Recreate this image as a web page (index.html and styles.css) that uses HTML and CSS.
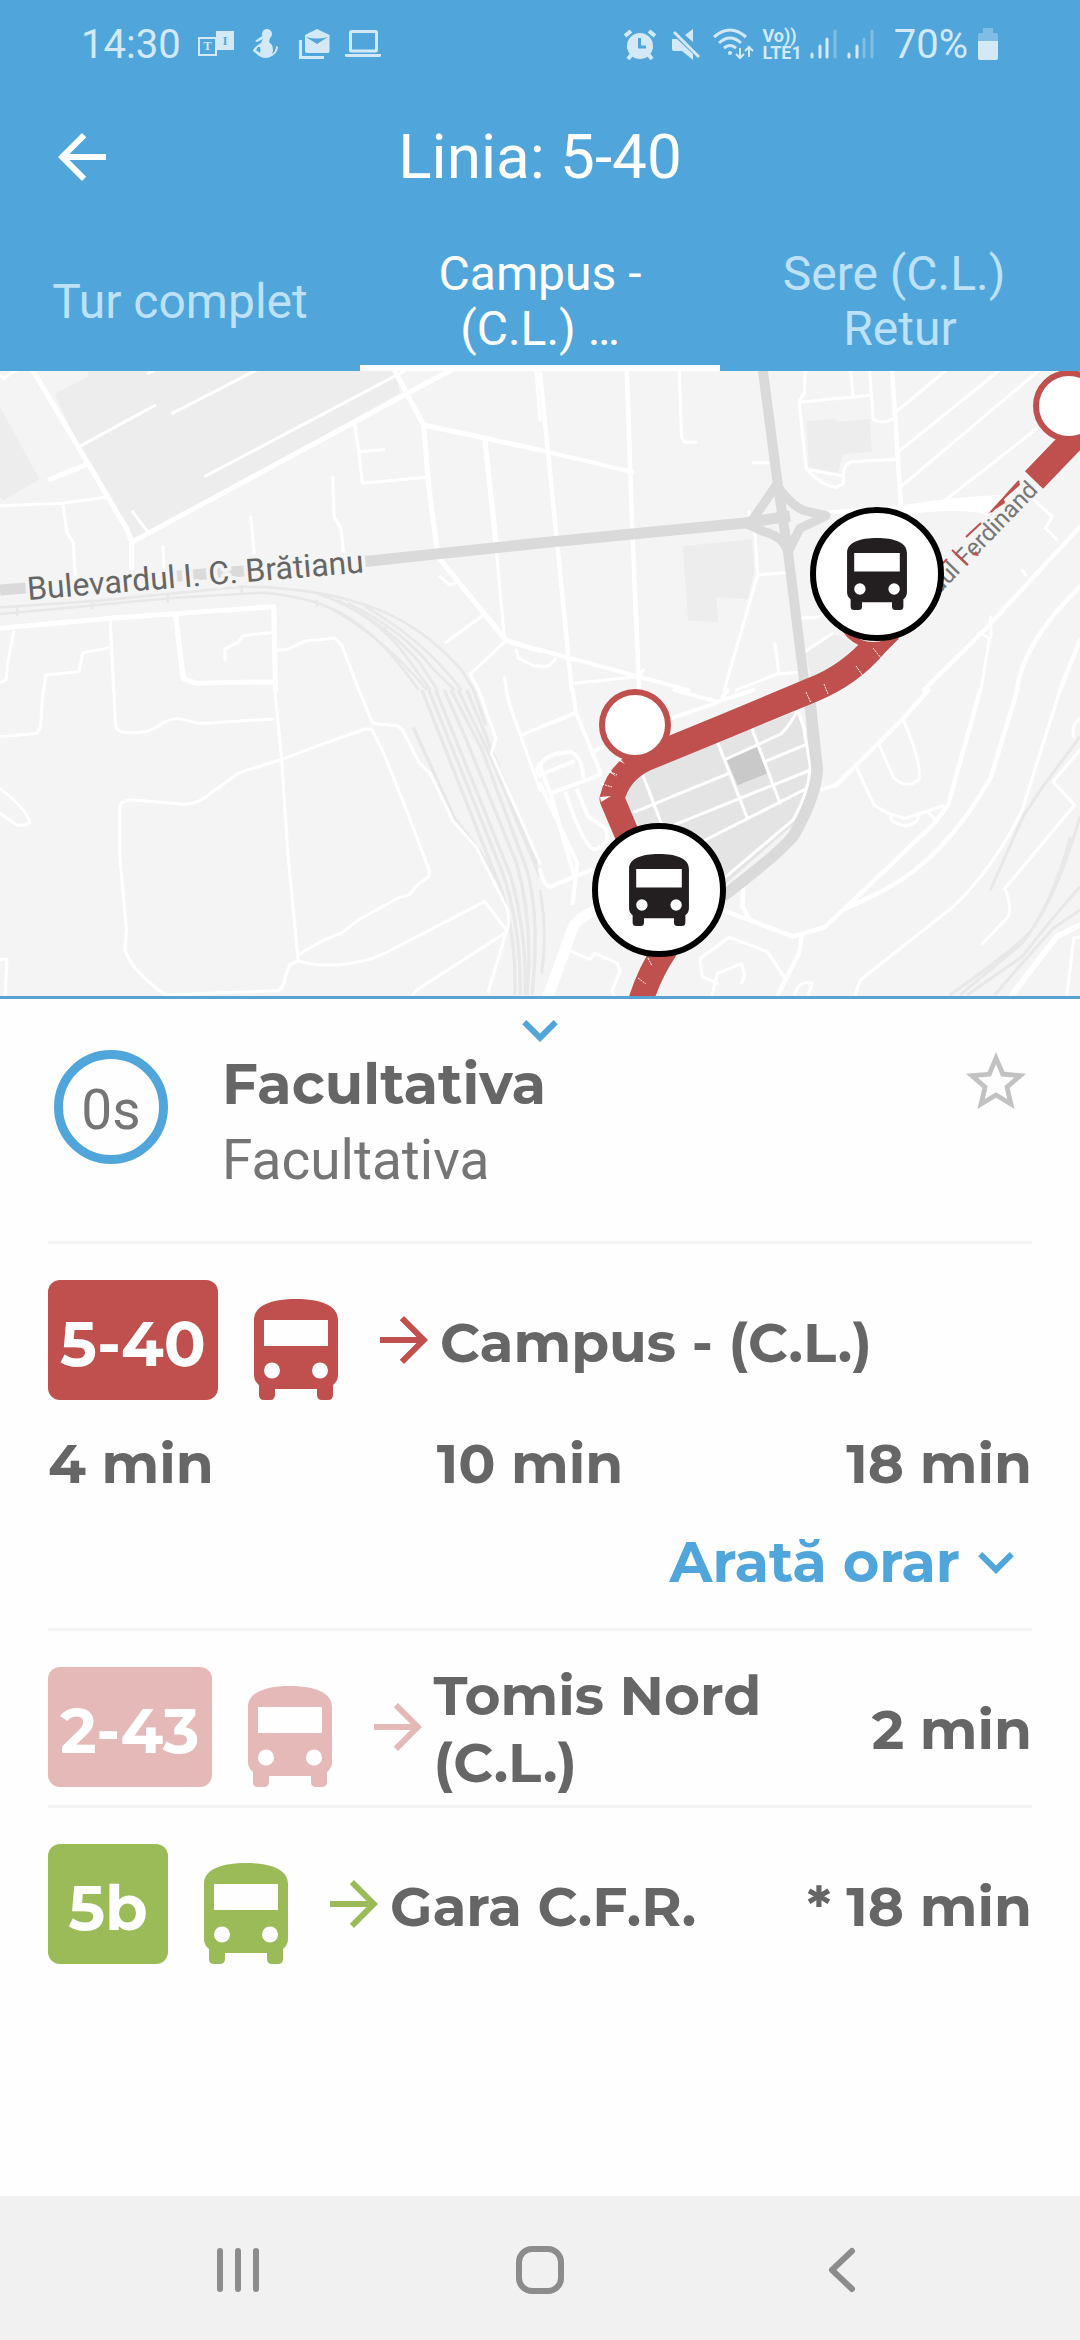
FILE: index.html
```html
<!DOCTYPE html>
<html lang="ro">
<head>
<meta charset="utf-8">
<meta name="viewport" content="width=device-width, initial-scale=1">
<title>Linia: 5-40</title>
<link rel="stylesheet" href="styles.css">
</head>
<body>
<svg class="defs" aria-hidden="true">
  <symbol id="bus" viewBox="0 0 84 101"><path fill="currentColor" fill-rule="evenodd" d="M0 21C0 6 18 0 42 0S84 6 84 21V76Q84 82 79 86V96Q79 101 74 101H68Q63 101 63 96V90H21V96Q21 101 16 101H10Q5 101 5 96V86Q0 82 0 76ZM10 21V47H74V21ZM26 71.500A8 8 0 1 0 10 71.500A8 8 0 1 0 26 71.500ZM74 71.500A8 8 0 1 0 58 71.500A8 8 0 1 0 74 71.500Z"/></symbol>
  <symbol id="arrow" viewBox="4 4 16 16"><path fill="currentColor" d="M12 4l-1.410 1.410L16.170 11H4v2h12.170l-5.580 5.590L12 20l8-8z"/></symbol>
  <symbol id="chevron" viewBox="6 8.590 12 7.410"><path fill="currentColor" d="M7.410 8.590L12 13.170l4.590-4.580L18 10l-6 6-6-6z"/></symbol>
</svg>
<div class="app">
  <header class="header">
    <div class="status">
      <div class="status-group status-left">
        <span>14:30</span>
        <svg class="ic-translate" width="36" height="26" viewBox="198 30 36 26"><path d="M199 37H216V54H199Z" fill="none" stroke="currentColor" stroke-width="2"/><path d="M216 30H234V49H216Z" fill="currentColor"/><text x="207.500" y="49" text-anchor="middle" class="glyph">T</text><text x="225" y="44" text-anchor="middle" class="glyph glyph-dark">I</text></svg>
        <svg class="ic-figure" width="26" height="30" viewBox="253 28 26 30"><g fill="currentColor"><circle cx="267" cy="33" r="5"/><path d="M262 35L255 40L257 41L263 38L261 42C257 44 253 48 253 50L259 55Q266 59 272 55Q278 51 278 46L276 45Q276 50 272 53Q274 49 272 44Q270 42 269 41L270 37Z"/></g><path d="M258 46L256 49L260 52Q261 49 260 46Z" fill="#50a6db"/></svg>
        <svg class="ic-mail" width="32" height="30" viewBox="299 27 32 30"><path d="M300.500 38V55.500H324" fill="none" stroke="currentColor" stroke-width="3"/><path d="M305 33L317 27L329.500 33V49Q329.500 51 328 51H307Q305 51 305 49Z" fill="currentColor"/><path d="M306 35Q317 38 328 35L317 42Z" fill="#50a6db"/></svg>
        <svg width="36" height="28" viewBox="345 29 36 28"><rect x="350.500" y="30.500" width="26" height="19.500" rx="1" fill="none" stroke="currentColor" stroke-width="3"/><path d="M345 53H381V55Q381 56 379 56H347Q345 56 345 55Z" fill="currentColor"/></svg>
      </div>
      <div class="status-group status-right">
        <svg width="32" height="31" viewBox="0 0 32 31"><circle cx="16" cy="17" r="13" fill="currentColor"/><path d="M1 7L7 2M31 7L25 2M4 30L8 25M28 30L24 25" stroke="currentColor" stroke-width="4"/><path d="M15.500 9V18H22" fill="none" stroke="#50a6db" stroke-width="3"/></svg>
        <svg class="ic-mute" width="28" height="31" viewBox="0 0 28 31"><path d="M0 10H5L21 25V31L10 22H2Q0 22 0 20ZM21 0V13L13 6Z" fill="currentColor"/><path d="M2 3L27 28" stroke="currentColor" stroke-width="3"/></svg>
        <svg class="ic-wifi" width="41" height="32" viewBox="0 0 41 32"><g fill="none" stroke="currentColor" stroke-width="3"><path d="M1 9Q17-5 33 9M6 15Q17 5 28 15M11 20Q17 15 23 20"/><path d="M27 20V30M23 26L27 30L31 26M36 29V19M32 23L36 19L40 23" stroke-width="2"/></g><circle cx="17" cy="25" r="2" fill="currentColor"/></svg>
        <span class="volte">Vo))<br>LTE1</span>
        <svg width="27" height="30" viewBox="0 0 27 30"><g stroke="currentColor" stroke-width="3" stroke-linecap="round"><path d="M2 25V28M10 17V28M17 10V28"/><path d="M25 2V28" opacity=".35"/></g></svg>
        <svg class="ic-signal" width="27" height="30" viewBox="0 0 27 30"><g stroke="currentColor" stroke-width="3" stroke-linecap="round"><path d="M2 25V28M10 17V28"/><path d="M17 10V28M25 2V28" opacity=".35"/></g></svg>
        <span class="percent">70%</span>
        <svg class="ic-battery" width="20" height="32" viewBox="0 0 20 32"><path d="M5 5V0H15V5H18Q20 5 20 7V13H0V7Q0 5 2 5Z" fill="currentColor" opacity=".35"/><path d="M0 13H20V30Q20 32 18 32H2Q0 32 0 30Z" fill="currentColor"/></svg>
      </div>
    </div>
    <div class="titlebar">
      <button class="icon-btn" type="button" aria-label="Înapoi"><svg class="back" width="48" height="48"><use href="#arrow"/></svg></button>
      <h1>Linia: 5-40</h1>
    </div>
    <nav class="tabs" role="tablist">
      <button type="button" role="tab" class="tab">Tur complet</button>
      <button type="button" role="tab" class="tab active" aria-selected="true">Campus -<br>(C.L.) …</button>
      <button type="button" role="tab" class="tab">Sere (C.L.)&nbsp;<br>Retur</button>
    </nav>
  </header>

  <main>
    <svg class="map" viewBox="0 371 1080 625" preserveAspectRatio="xMidYMid slice" role="img" aria-label="Hartă">
      <rect y="371" width="1080" height="625" fill="#f4f4f4"/>
      <!-- built-up areas -->
      <g fill="#ededed">
        <g transform="translate(0 370) scale(.3444 .3333)"><path d="M0 110L115 328L8 392L0 380ZM158 72L255 20V0H1150L1160 70L385 515L370 480L230 230Z"/></g>
        <g transform="translate(540 370) scale(.3444 .3333)"><path d="M774 154L860 147V156L957 147L964 245L880 253L866 308L780 292ZM414 528L615 508L622 600L603 688L512 681L517 756L431 752ZM770 850L850 790L930 830L790 925Z"/></g>
        <g transform="translate(540 690) scale(.3444 .3333)"><path fill="#e4e4e4" d="M265 260L750 62L800 200L780 320L740 400L530 590L300 430L240 318Z"/><path fill="#c9c9c9" d="M541 207L630 171L660 250L574 286Z"/></g>
      </g>
      <!-- railway lines -->
      <g fill="none" stroke="#e8e8e8">
        <g transform="translate(0 370) scale(.3444 .3333)" stroke-width="8"><path d="M0 712L290 692L700 650Q900 650 1060 704T1340 900L1375 960M0 732L270 706L500 684L760 668Q920 680 1020 748T1215 960M920 670Q1090 730 1180 860L1250 960M980 690Q1130 770 1220 880L1270 960M1010 700Q1170 780 1260 900L1320 960M960 715Q1110 800 1240 960M1060 710Q1230 810 1340 960M50 705V738M268 690V718M487 670V698M702 645V676M920 690V710M1120 770V795"/></g>
        <g transform="translate(0 690) scale(.3444 .3333)" stroke-width="10"><path d="M1225 0L1440 560Q1500 700 1495 915M1245 0L1460 550Q1515 720 1510 915M1265 0L1480 550Q1530 720 1525 915M1290 0L1350 140L1500 520Q1550 700 1530 915M1310 0L1400 180L1530 540Q1568 680 1545 915M1330 0L1420 190L1568 560M1355 0L1400 110L1560 520M1375 0L1410 105M1200 112L1320 385L1390 480L1440 565"/></g>
        <g transform="translate(540 690) scale(.3444 .3333)" stroke-width="9"><path d="M0 600Q22 730 5 850M1568 140L1460 290L1405 375L1355 490L1308 600M1568 380Q1500 620 1420 730Q1350 800 1190 915M1540 440Q1490 640 1400 760L1220 915M1568 590Q1490 680 1400 800L1240 915M1568 660L1490 715L1400 820L1320 915"/></g>
      </g>
      <!-- streets -->
      <g fill="none" stroke="#fff" stroke-width="9" stroke-linejoin="round" stroke-linecap="round">
        <g transform="translate(0 370) scale(.3444 .3333)">
          <path stroke-width="15" d="M95 0L370 480L382 515V600M385 515L1180 72L1310 0M0 775L320 745L795 710L800 960M510 738L532 925L570 940L795 935M1230 165L1568 240M1145 0L1230 165L1245 350L1268 530M1408 210L1440 515M1275 565L1470 812L1568 842M145 328L248 285"/>
          <path d="M230 230L450 106M500 130L745 0M597 318L1180 0M430 10L450 0M0 407L182 400L305 382M182 400L195 490L213 518L218 615M385 425L430 487M473 530L476 590M728 440L738 550M966 322L970 440L990 475L997 545M1030 165L1042 245L1052 340L1240 322M1042 245L1115 239M1556 0L1568 150M1442 548L1465 812M1470 812L1365 912L1390 960M1295 817L1403 736M1500 840L1505 865L1550 888H1568M1278 620L1305 645L1325 638M653 868V836L690 818L706 797L785 788M805 840H830L890 812L972 805L992 825L1042 960M40 785L22 880L18 930L0 938M320 750L330 960M320 833L240 848L230 905L133 915L127 960M1465 922L1470 960M0 15L10 25L50 0"/>
        </g>
        <g transform="translate(540 370) scale(.3444 .3333)">
          <path stroke-width="13" d="M0 10L50 520L92 960M252 0L268 480L288 960M0 240L268 306M0 840L430 960M1022 0L1048 405M1568 470L1300 770L1115 960"/>
          <path d="M404 0L411 200L420 217H453M620 278H663M770 0L768 70L752 92L773 295Q820 350 860 352L882 340L880 318L775 298M752 97L962 76L968 148Q1000 165 1030 142M902 0L908 74M957 0L962 76M880 318Q880 285 905 275L1035 268M1035 125L1180 0M1035 250L1335 0M1048 350L1450 0M1175 392L1450 170M607 425L625 500L632 615L535 960M632 615L712 608M682 820L694 912L750 907M690 912L570 960M760 745L810 740M770 845L850 790M100 940L285 920L300 900M0 890Q30 895 45 865M1430 385L1487 440L1468 475L1500 508M1400 600L1410 615M1280 790L1305 805L1280 960M1308 740L1310 800"/>
          <path stroke-width="13" d="M1568 650Q1400 820 1385 960M1568 810L1510 960"/>
          <path fill="#fff" d="M840 425L1050 410L1190 390L1350 378L1300 432Q1230 405 1060 430Z"/>
        </g>
        <g transform="translate(0 690) scale(.3444 .3333)">
          <path d="M125 0L118 110L108 130L0 140M331 0L335 105Q340 130 380 128Q430 130 460 108Q490 85 520 86L580 101L792 87M798 0L818 208L835 480L865 805M818 208L695 248L615 307Q575 345 530 343L390 330Q348 330 348 355V500L367 720L363 780Q380 840 480 915L810 902Q825 890 828 860L842 824L865 812Q950 840 1055 812Q1090 805 1130 783L1407 635L1470 720M818 208L950 157L1060 117L1080 118L1112 185L1180 360L1248 545L1245 560L1210 587L1190 613L1160 622L1040 690L995 727L935 753L865 795M1042 0L1080 95L1090 101L1155 107L1170 122L1217 218L1250 252L1315 392L1385 475L1470 650Q1485 700 1470 725L1418 905M1470 727L1210 900L1200 915M1390 0L1440 145L1427 190L1568 520M1470 0L1480 45L1568 300M1515 135L1568 112M0 295Q90 370 85 400Q65 410 45 403L0 370M0 808H20L15 915M1568 220Q1550 240 1568 260"/>
        </g>
        <g transform="translate(540 690) scale(.3444 .3333)">
          <path stroke-width="12" d="M95 0L105 70L175 245M390 0L515 35L620 0M530 20L545 0M380 85L515 38M155 185L180 172M0 112L100 70M0 230Q10 190 90 185Q125 205 125 260M0 230L30 310L175 255M0 280L108 520L95 640M0 255L95 215M30 310L100 560L30 590Q10 590 0 540M108 300L140 380L190 415Q210 460 160 478Q130 480 75 310M100 560L150 540"/>
          <path d="M295 245L352 400M265 370L548 250M390 405L785 240M480 450L785 290M515 155L602 385M615 115L697 340M541 207L700 132Q730 100 748 60L765 110L785 230Q780 310 735 390L540 560M658 213L770 165"/>
          <path stroke-width="13" d="M1128 0L1055 85L860 285L820 297M1278 0L1185 345L1145 400L870 670M1386 0L1310 260Q1180 500 1000 600L880 660L825 712L735 740L530 660M590 590L588 650L610 690M760 740L752 790L690 915"/>
          <path d="M915 225L970 345L1010 370L1060 385L1170 348M1020 375Q1010 395 1060 408Q1100 400 1100 375M1130 370L1145 385M985 165L1025 260Q1060 300 1100 270Q1110 220 1055 90M1510 0L1400 360Q1320 530 1200 650L930 870L915 915M1568 85Q1540 110 1550 140M1568 180L1490 275L1552 345L1350 595Q1370 650 1360 680L1285 760M80 780L145 808L160 790L225 820L232 845L208 905L215 915M500 915L515 850L585 822L595 855L585 880M515 880L470 860L465 805L550 742L660 785L708 860M740 915Q750 870 790 880L780 915M1568 740L1550 745L1530 915"/>
          <path stroke-width="17" d="M1568 705L1500 740L1370 915"/>
          <path stroke-width="32" d="M25 915L95 715Q110 680 180 655"/>
        </g>
      </g>
      <!-- main roads -->
      <g fill="none" stroke="#dadada">
        <path stroke-width="11" d="M0 590L360 562L540 543L745 523M745 523L790 516"/>
        <g transform="translate(540 370) scale(.3444 .3333)"><path stroke-width="29" stroke-linejoin="round" d="M647 0L690 340L710 480L720 545L770 960"/><path stroke-width="27" stroke-linecap="round" d="M690 340L620 445M600 462L650 485Q705 500 718 540M690 350Q740 420 780 425L830 437M825 440L755 475L720 545"/></g>
        <g transform="translate(540 690) scale(.3444 .3333)"><path stroke-width="34" stroke-linejoin="round" d="M780 0L805 240Q800 320 740 430Q720 470 530 620"/></g>
      </g>
      <!-- route -->
      <g fill="none" stroke="#bf504d" stroke-width="25" stroke-linejoin="round">
        <path d="M1082 430L1034 480M890 630L876 644Q850 675 812 690L728 725L645 759Q618 772 612 799L640 865L665 950Q650 972 641 1000"/>
      </g>
      <g stroke="#fff" stroke-width="1" stroke-dasharray="2 1"><path d="M873 648L881 658M856 666L863 676M824 684L828 694M806 692L811 703M608 770L617 775M602 784L612 787M648 958L652 966M638 978L646 984"/></g>
      <path d="M600 797L611 796L601 802ZM616 759L625 764L621 760ZM606 770L617 777L610 771Z" fill="#fff"/>
      <g class="road-label">
        <text x="28" y="600" font-size="32" transform="rotate(-4.700 28 600)">Bulevardul I. C. Brătianu</text>
        <text x="1039" y="491" font-size="24" text-anchor="end" class="minor" transform="rotate(-46 1039 491)">dul Ferdinand</text>
      </g>
      <path d="M1019 481L991 512M981 523L966 537M952 550L968 565M942 564L947 559" stroke="#bf504d" stroke-width="2"/>
      <path d="M1019 481L1020 485L1004 499L1005 503L988 514ZM976 551L979 556L972 555Z" fill="#bf504d"/>
      <g fill="#fff" stroke="#bf504d" stroke-width="6">
        <circle cx="1069" cy="406" r="33"/><circle cx="635" cy="725" r="33"/><circle cx="873" cy="612" r="33"/>
      </g>
      <g class="vehicle"><circle cx="877" cy="574" r="64"/><use href="#bus" x="847" y="538" width="60" height="72"/></g>
      <g class="vehicle"><circle cx="659" cy="890" r="64"/><use href="#bus" x="629" y="854" width="60" height="72"/></g>
    </svg>

    <section class="sheet">
      <button class="icon-btn collapse" type="button" aria-label="Restrânge"><svg width="36" height="22"><use href="#chevron"/></svg></button>
      <div class="stop">
        <div class="timer">0s</div>
        <div class="stop-names">
          <h2>Facultativa</h2>
          <p>Facultativa</p>
        </div>
        <button class="icon-btn star" type="button" aria-label="Favorit"><svg width="60" height="57" viewBox="2 2 20 19"><path fill="currentColor" d="M22 9.240l-7.190-.620L12 2 9.190 8.630 2 9.240l5.460 4.730L5.820 21 12 17.270 18.180 21l-1.630-7.030L22 9.240zM12 15.400l-3.760 2.270 1-4.280-3.320-2.880 4.380-.380L12 6.100l1.710 4.040 4.380.380-3.320 2.880 1 4.280L12 15.400z"/></svg></button>
      </div>

      <article class="line red first">
        <div class="line-row">
          <span class="badge">5-40</span>
          <svg class="bus" width="84" height="101"><use href="#bus"/></svg>
          <svg class="dir" width="48" height="48"><use href="#arrow"/></svg>
          <span class="dest">Campus - (C.L.)</span>
        </div>
        <div class="times"><span>4 min</span><span>10 min</span><span>18 min</span></div>
        <button class="schedule" type="button">Arată orar<svg width="36" height="22"><use href="#chevron"/></svg></button>
      </article>
      <article class="line pink">
        <div class="line-row">
          <span class="badge">2-43</span>
          <svg class="bus" width="84" height="101"><use href="#bus"/></svg>
          <svg class="dir" width="48" height="48"><use href="#arrow"/></svg>
          <span class="dest">Tomis Nord<br>(C.L.)</span>
          <span class="eta">2 min</span>
        </div>
      </article>
      <article class="line green">
        <div class="line-row">
          <span class="badge">5b</span>
          <svg class="bus" width="84" height="101"><use href="#bus"/></svg>
          <svg class="dir" width="48" height="48"><use href="#arrow"/></svg>
          <span class="dest">Gara C.F.R.</span>
          <span class="eta">* 18 min</span>
        </div>
      </article>
    </section>
  </main>

  <footer class="sysnav">
    <button class="icon-btn" type="button" aria-label="Recente"><svg width="48" height="48" viewBox="0 0 48 48"><path d="M6 5V43M24 5V43M42 5V43" stroke="currentColor" stroke-width="6" stroke-linecap="round"/></svg></button>
    <button class="icon-btn" type="button" aria-label="Acasă"><svg width="48" height="48" viewBox="0 0 48 48"><rect x="3" y="3" width="42" height="42" rx="13" fill="none" stroke="currentColor" stroke-width="6"/></svg></button>
    <button class="icon-btn" type="button" aria-label="Înapoi"><svg width="48" height="48" viewBox="0 0 48 48"><path d="M34 5L14 24L34 43" fill="none" stroke="currentColor" stroke-width="6" stroke-linecap="round" stroke-linejoin="round"/></svg></button>
  </footer>
</div>
</body>
</html>
```

FILE: styles.css
```css
* { box-sizing: border-box; }

body {
  margin: 0;
  background: #fefefe;
  color: #666;
  font-family: Roboto, sans-serif;
}

svg { display: block; flex: none; }
.defs { position: absolute; width: 0; height: 0; }

button {
  padding: 0;
  border: 0;
  background: none;
  color: inherit;
  font: inherit;
}

.app {
  display: flex;
  flex-direction: column;
  min-height: 100vh;
}

main { flex: 1; }

/* header */
.header { background: #50a6db; color: #fff; }

.status {
  display: flex;
  justify-content: space-between;
  height: 86px;
  padding: 2px 82px 0 81px;
  color: #d3e9f7;
  font-size: 40px;
}

.status-group { display: flex; align-items: center; }
.status-left { gap: 14px; }
.status-right { gap: 8px; }
.ic-translate { margin-left: 3px; }
.ic-figure { margin-left: 5px; }
.ic-mail { margin-left: 6px; }
.ic-mute { margin-left: 8px; }
.ic-wifi { margin-left: 5px; }
.ic-signal { margin-left: 2px; }
.ic-battery { margin-left: 2px; }
.volte {
  font-size: 18px;
  line-height: 17px;
  font-weight: 700;
}
.percent { margin-left: 12px; }

.glyph {
  fill: currentColor;
  font: bold 12px "Liberation Serif", serif;
}
.glyph-dark { fill: #50a6db; }

.titlebar {
  display: grid;
  grid-template-columns: 1fr auto 1fr;
  align-items: center;
  height: 145px;
  padding: 0 58px 4px;
}
.titlebar h1 {
  margin: 0;
  font-size: 62px;
  font-weight: 400;
}
.back { transform: scaleX(-1); }

.tabs {
  display: grid;
  grid-template-columns: repeat(3, 1fr);
  height: 140px;
}
.tab {
  border-top: 6px solid transparent;
  border-bottom: 6px solid transparent;
  color: #bde1f6;
  font-size: 48px;
  line-height: 55px;
}
.tab.active { color: #fff; border-bottom-color: #fff; }

/* map */
.map { width: 100%; aspect-ratio: 1080 / 625; }

.road-label text {
  fill: #666;
  stroke: #f4f4f4;
  stroke-width: 8px;
  stroke-linejoin: round;
  paint-order: stroke;
}
.road-label .minor { fill: #777; stroke-width: 6px; }
.vehicle { color: #231f20; }
.vehicle circle { fill: #fff; stroke: #000; stroke-width: 6px; }

/* sheet */
.sheet {
  padding: 21px 48px 0;
  border-top: 3px solid #58a3d2;
}
.collapse { display: block; margin: 0 auto 8px; color: #50a6db; }

.stop {
  display: flex;
  align-items: flex-start;
  padding: 0 6px 45px;
}
.timer {
  width: 114px;
  height: 114px;
  border: 9px solid #50a6db;
  border-radius: 50%;
  color: #757575;
  font-size: 55px;
  line-height: 102px;
  text-align: center;
}
.stop-names { flex: 1; margin-left: 54px; }
.stop-names h2 {
  margin: 0 0 6px;
  font: 700 56px/68px Montserrat, Inter, sans-serif;
}
.stop-names p {
  margin: 0;
  color: #757575;
  font-size: 55px;
  line-height: 72px;
}
.star { margin-top: 2px; color: #c2c2c2; }

.line {
  padding: 36px 0 18px;
  border-top: 3px solid #f3f3f3;
  font: 700 55px/67px Montserrat, Inter, sans-serif;
}
.line.first { padding-bottom: 32px; }
.red { --line: #bf504d; }
.pink { --line: #e5b9b8; }
.green { --line: #9bbb59; }

.line-row {
  display: flex;
  align-items: center;
  height: 120px;
}
.badge {
  min-width: 120px;
  height: 120px;
  padding: 6px 12px 0;
  border-radius: 12px;
  background: var(--line);
  color: #fff;
  font-size: 62px;
  line-height: 116px;
  text-align: center;
}
.bus { align-self: flex-end; margin-left: 36px; color: var(--line); }
.dir { margin: 0 12px 0 42px; color: var(--line); }
.dest { flex: 1; padding-top: 4px; }
.eta { margin-left: 24px; padding-top: 4px; }

.times {
  display: flex;
  justify-content: space-between;
  margin-top: 30px;
}
.schedule {
  display: flex;
  align-items: center;
  gap: 18px;
  margin: 32px 18px 0 auto;
  color: #50a6db;
  font-size: 56px;
}

/* system navigation */
.sysnav {
  display: grid;
  grid-template-columns: repeat(3, 1fr);
  justify-items: center;
  align-items: center;
  height: 144px;
  padding: 4px 8% 0;
  background: #f1f1f1;
  color: #8c8c8c;
}
```
